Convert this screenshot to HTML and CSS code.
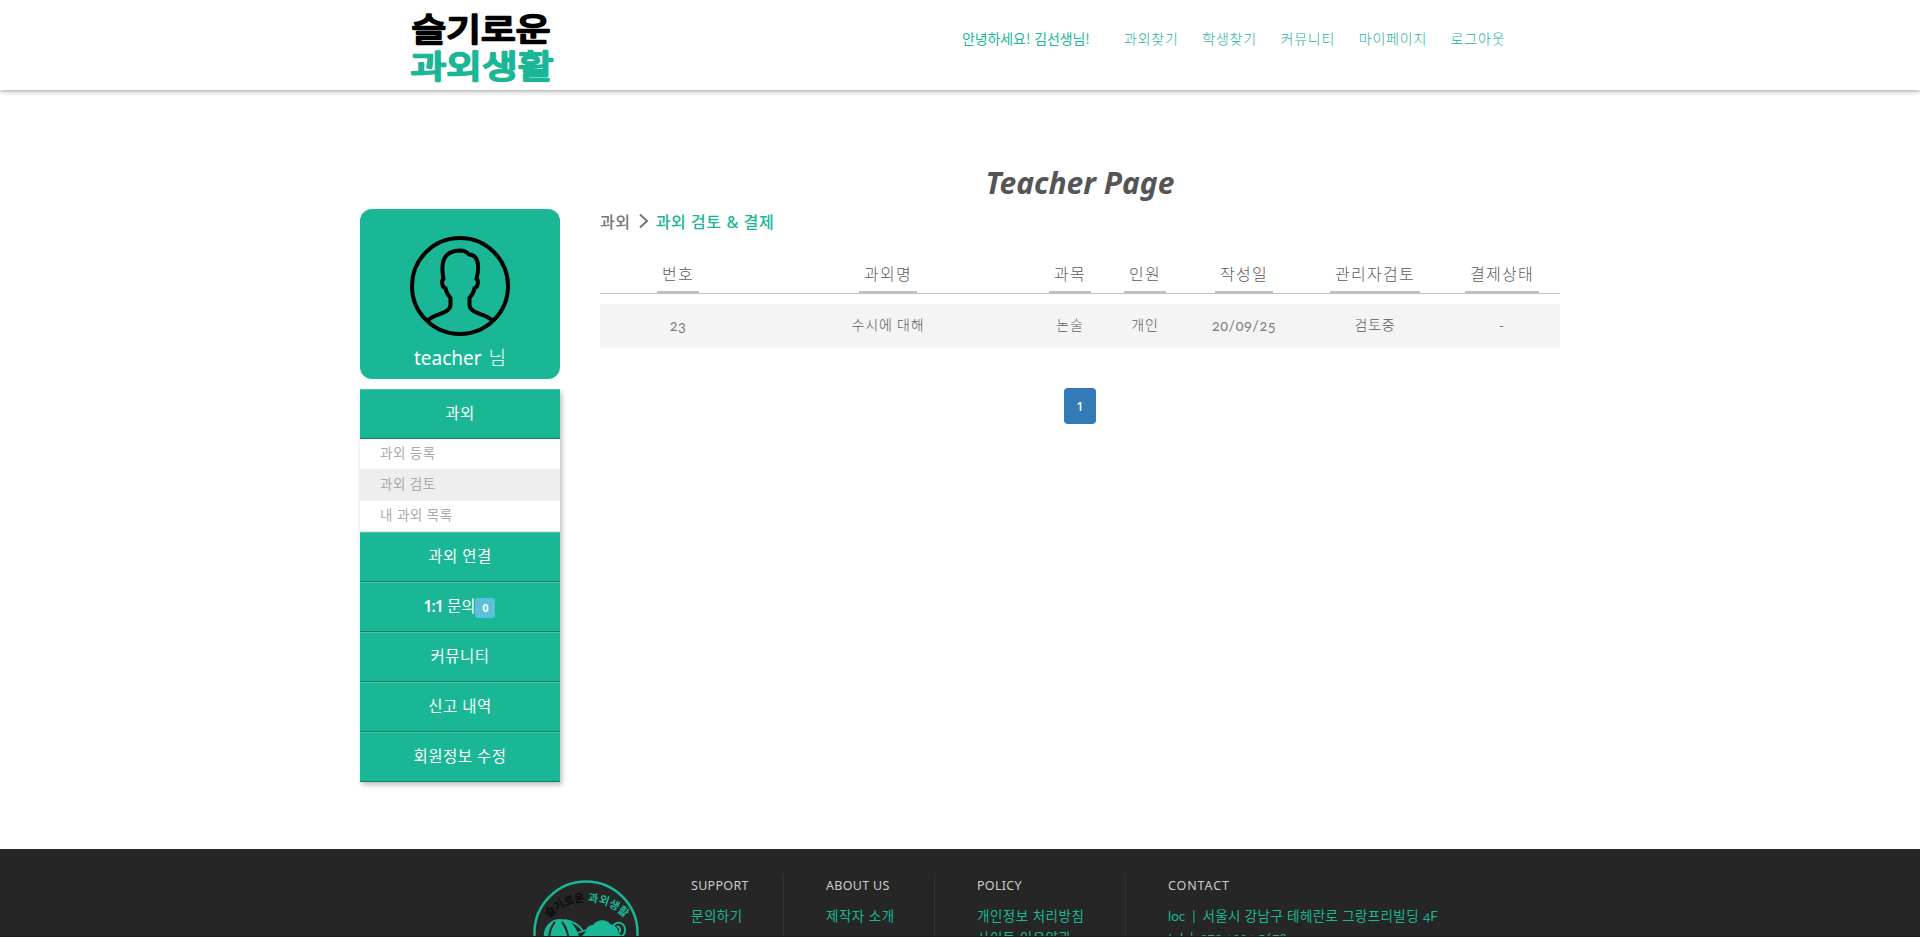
FILE: index.html
```html
<!DOCTYPE html>
<html lang="ko">
<head>
<meta charset="utf-8">
<title>Teacher Page</title>
<link rel="stylesheet" href="styles.css">
</head>
<body>
<div class="page">
  <header class="header">
    <svg class="logo" width="160" height="84" viewBox="0 0 160 84">
      <text class="logo-top" x="11.500" y="41" textLength="139" lengthAdjust="spacingAndGlyphs">슬기로운</text>
      <text class="logo-bottom" x="10.500" y="78" textLength="143" lengthAdjust="spacingAndGlyphs">과외생활</text>
    </svg>
    <nav class="nav">
      <span class="greeting">안녕하세요! 김선생님!</span>
      <a>과외찾기</a><a>학생찾기</a><a>커뮤니티</a><a>마이페이지</a><a>로그아웃</a>
    </nav>
  </header>

  <main class="main">
    <aside class="sidebar">
      <section class="profile">
        <svg width="100" height="100" viewBox="0 0 100 100" fill="none" stroke="#000" stroke-width="4" stroke-linejoin="round">
          <circle cx="50" cy="50" r="48"/>
          <path d="M17 85 C25 77 40 78 40.500 69 V62 C38 59 36 56 35.500 52 C32 52 31 44 33.500 43 C31 30 31 15 50 14.500 C54 14.500 57 16 59 18.500 C68 19 70 29 66.500 43 C69 44 68 52 64.500 52 C64 56 62 59 59.500 62 V69 C60 78 75 77 83 85"/>
        </svg>
        <p class="profile-name">teacher <span>님</span></p>
      </section>
      <ul class="menu">
        <li class="menu-item">과외</li>
        <li class="sub">
          <ul class="submenu">
            <li>과외 등록</li>
            <li class="active">과외 검토</li>
            <li>내 과외 목록</li>
          </ul>
        </li>
        <li class="menu-item">과외 연결</li>
        <li class="menu-item inquiry"><b>1:1</b>&nbsp;문의<span class="badge">0</span></li>
        <li class="menu-item">커뮤니티</li>
        <li class="menu-item">신고 내역</li>
        <li class="menu-item">회원정보 수정</li>
      </ul>
    </aside>

    <section class="content">
      <h1 class="title">Teacher Page</h1>
      <div class="crumbs">
        <span>과외</span>
        <svg width="10" height="16" viewBox="0 0 10 16" fill="none" stroke="#777" stroke-width="2"><path d="M1 1.500 L8 8 L1 14.500"/></svg>
        <span class="current">과외 검토 &amp; 결제</span>
      </div>
      <div class="row thead">
        <div><span>번호</span></div><div><span>과외명</span></div><div><span>과목</span></div><div><span>인원</span></div><div><span>작성일</span></div><div><span>관리자검토</span></div><div><span>결제상태</span></div>
      </div>
      <div class="row tbody">
        <div class="num">23</div><div>수시에 대해</div><div>논술</div><div>개인</div><div class="num">20/09/25</div><div>검토중</div><div>-</div>
      </div>
      <div class="pager"><a class="page-link">1</a></div>
    </section>
  </main>

  <footer class="footer">
    <svg class="emblem" width="110" height="110" viewBox="0 0 110 110">
      <defs>
        <path id="arc" d="M14 45.700 A51 51 0 0 1 98 45.700"/>
      </defs>
      <circle cx="55" cy="55" r="51.500" fill="none" stroke="#19b795" stroke-width="2.500"/>
      <text class="emblem-text" fill="#0a0a0a"><textPath href="#arc" startOffset="7" textLength="40">슬기로운</textPath></text>
      <text class="emblem-text" fill="#19b795"><textPath href="#arc" startOffset="50" textLength="41">과외생활</textPath></text>
      <path d="M13 62 C11 51 18 41 29 41 C38 41 45 46 49 62 Z" fill="#19b795"/>
      <path d="M18 62 Q18 51 24 44 M38 62 Q36 50 31 44" fill="none" stroke="#262626" stroke-width="2"/>
      <path d="M34 42 Q46 44 52 53 M46 55 L56 52" fill="none" stroke="#19b795" stroke-width="1.800"/>
      <path d="M48 62 C50 58 54 56 55 53 C55 49 59 47 62 47 C66 41 76 41 79 46 C84 47 88 51 87 55 C90 56 91 60 91 62 Z" fill="#19b795"/>
      <path d="M82 49 C84 42 94 44 94 52 C94 57 91 59 88 58 M86 48 Q91 50 88 55" fill="none" stroke="#19b795" stroke-width="2"/>
    </svg>
    <div class="fcol support"><h4>SUPPORT</h4><p>문의하기</p></div>
    <div class="fcol about"><h4>ABOUT US</h4><p>제작자 소개</p></div>
    <div class="fcol policy"><h4>POLICY</h4><p>개인정보 처리방침</p><p>사이트 이용약관</p></div>
    <div class="fcol contact"><h4>CONTACT</h4><p><span class="num">loc&nbsp; | &nbsp;</span>서울시 강남구 테헤란로 그랑프리빌딩 <span class="num">4F</span></p><p class="num">tel&nbsp; | &nbsp;070.1234.5678</p></div>
  </footer>
</div>
</body>
</html>
```
FILE: styles.css
```css
* { box-sizing: border-box; }
body {
  margin: 0;
  background: #fff;
  color: #777;
  font-family: "Noto Sans", "Noto Sans CJK KR", sans-serif;
  font-size: 14px;
}
ul, p, h1, h4 { margin: 0; padding: 0; list-style: none; }
.page { height: 937px; overflow: hidden; display: flex; flex-direction: column; }

.header {
  height: 90px;
  flex: none;
  display: flex;
  padding-left: 400px;
  box-shadow: 0 1px 5px rgba(0, 0, 0, .4);
}
.logo { flex: none; overflow: visible; }
.logo text { font-family: "Noto Sans CJK KR", sans-serif; font-weight: 400; font-size: 31.500px; stroke-width: 2.300; stroke-linejoin: round; }
.logo-top { fill: #000; stroke: #000; }
.logo-bottom { fill: #19b795; stroke: #19b795; }
.nav {
  display: flex;
  gap: 23.500px;
  margin-left: 402px;
  height: 20px;
  margin-top: 28px;
  line-height: 20px;
  font-family: "Noto Sans CJK KR", sans-serif;
  font-weight: 300;
  letter-spacing: .8px;
  color: #19b0a2;
  white-space: nowrap;
}
.greeting { width: 138.500px; font-weight: 400; letter-spacing: -.1px; color: #19b795; }

.main { display: flex; gap: 40px; width: 1200px; margin: 0 auto; height: 759px; flex: none; }
.sidebar { width: 200px; padding-top: 119px; }
.profile {
  height: 170px;
  background: #19b795;
  border-radius: 12px;
  padding-top: 27px;
  text-align: center;
}
.profile svg { display: block; margin: 0 auto; }
.profile-name { color: #fff; font-size: 19px; line-height: 28px; margin-top: 8px; }
.profile-name span { font-weight: 300; margin-left: 2px; }
.menu { margin-top: 10px; box-shadow: 2px 3px 5px rgba(0, 0, 0, .25); }
.menu-item {
  height: 50px;
  background: #19b795;
  border-top: 1px solid #47c5aa;
  border-bottom: 1px solid #117f68;
  color: #fff;
  font-size: 15.500px;
  letter-spacing: .5px;
  display: flex;
  align-items: center;
  justify-content: center;
  padding-bottom: 4px;
}
.menu-item b { font-weight: 600; letter-spacing: -.9px; }
.inquiry { letter-spacing: 0; padding-right: 1px; padding-bottom: 3px; }
.badge {
  width: 20px;
  height: 20px;
  margin-top: 5px;
  border-radius: 3px;
  background: #5bc0de;
  font-size: 11px;
  font-weight: 700;
  line-height: 20px;
  letter-spacing: 0;
  text-align: center;
}
.submenu { background: #fff; border-bottom: 1px solid #e8e8e8; color: #aaa; letter-spacing: .5px; }
.submenu li { height: 30px; line-height: 28px; padding-left: 20px; font-size: 13.500px; }
.submenu .active { height: 32px; line-height: 30px; background: #eee; }

.content { width: 960px; }
.title { margin-top: 73px; height: 40px; line-height: 40px; text-align: center; font-size: 30px; font-style: italic; font-weight: 700; color: #555; }
.crumbs { display: flex; align-items: center; gap: 8px; height: 24px; margin-top: 6px; font-size: 16px; font-weight: 500; letter-spacing: .6px; }
.current { color: #19b795; margin-left: -1px; }
.row { display: grid; grid-template-columns: 132px 288px 76px 74px 124px 138px 116px; padding-left: 12px; text-align: center; }
.thead { margin-top: 31px; height: 30px; border-bottom: 1px solid #c0c0c0; color: #5c5c5c; font-size: 16px; font-weight: 300; letter-spacing: 1.280px; line-height: 20px; }
.thead span { display: inline-block; height: 29px; padding: 0 5px; border-bottom: 2px solid #c0c0c0; }
.tbody { margin-top: 10px; height: 44px; line-height: 42px; background: #f4f4f4; color: #5c5c5c; font-weight: 300; letter-spacing: .8px; }
.num { font-family: Lato, sans-serif; font-variant-numeric: oldstyle-nums; }
.tbody .num { font-size: 14.500px; font-weight: 400; letter-spacing: .5px; line-height: 44px; color: #808080; }
.pager { display: flex; justify-content: center; margin-top: 40px; }
.page-link { width: 32px; height: 36px; line-height: 36px; border-radius: 4px; background: #337ab7; color: #fff; text-align: center; font-size: 13px; font-weight: 500; }

.footer { height: 88px; flex: none; background: #262626; display: flex; padding: 25px 0 0 531px; overflow: hidden; border-bottom: 1px solid #1c1c1c; }
.emblem { flex: none; margin-top: 4px; }
.emblem-text { font-family: "Noto Sans CJK KR", sans-serif; font-weight: 700; font-size: 11px; }
.fcol { flex: none; height: 90px; white-space: nowrap; border-right: 1px solid #333; }
.fcol h4 { font-size: 12.500px; font-weight: 400; color: #ccc; line-height: 24px; letter-spacing: .3px; margin-bottom: 7px; }
.fcol p { font-size: 13.500px; line-height: 22px; color: #19b795; letter-spacing: .5px; }
.support { margin-left: 50px; width: 93px; }
.about { padding-left: 42px; width: 151px; }
.policy { padding-left: 42px; width: 191px; }
.contact { padding-left: 42px; border: 0; }
.contact h4 { letter-spacing: .9px; }
.contact p { letter-spacing: .38px; }
.contact .num { font-size: 13.500px; letter-spacing: 0; }
```
